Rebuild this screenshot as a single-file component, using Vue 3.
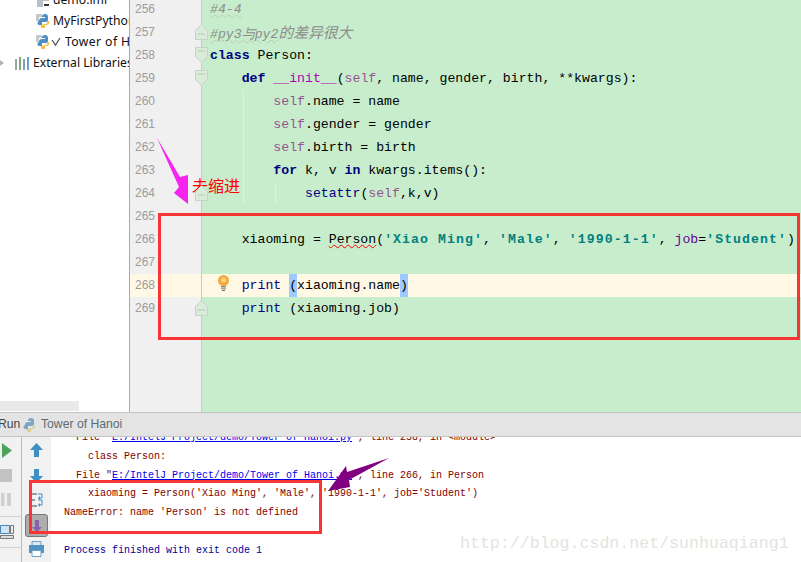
<script setup>
const codeLines = [
  { n: 256, t: [['c', '#4-4']] },
  { n: 257, t: [['c', '#py3与py2'], ['cz', '的差异很大']], fold: 'up' },
  { n: 258, t: [['k', 'class'], ['', ' Person:']], fold: 'down' },
  { n: 259, t: [['', '    '], ['k', 'def'], ['', ' '], ['m', '__init__'], ['', '('], ['s', 'self'], ['', ', name, gender, birth, **kwargs):']], fold: 'down' },
  { n: 260, t: [['', '        '], ['s', 'self'], ['', '.name = name']] },
  { n: 261, t: [['', '        '], ['s', 'self'], ['', '.gender = gender']] },
  { n: 262, t: [['', '        '], ['s', 'self'], ['', '.birth = birth']] },
  { n: 263, t: [['', '        '], ['k', 'for'], ['', ' k, v '], ['k', 'in'], ['', ' kwargs.items():']] },
  { n: 264, t: [['', '            '], ['f', 'setattr'], ['', '('], ['s', 'self'], ['', ',k,v)']], fold: 'up' },
  { n: 265, t: [] },
  { n: 266, t: [['', '    xiaoming = '], ['e', 'Person'], ['', '('], ['q', "'Xiao Ming'"], ['', ', '], ['q', "'Male'"], ['', ', '], ['q', "'1990-1-1'"], ['', ', '], ['j', 'job'], ['', '='], ['q', "'Student'"], ['', ')']] },
  { n: 267, t: [] },
  { n: 268, hl: true, t: [['', '    '], ['f', 'print'], ['', ' '], ['b', '('], ['', 'xiaoming.name'], ['b', ')']] },
  { n: 269, t: [['', '    '], ['f', 'print'], ['', ' (xiaoming.job)']], fold: 'up' }
]
const extraRows = Array.from({ length: 4 }, (_, i) => i)

const consoleLines = [
  [['', '  File "'], ['a', 'E:/IntelJ Project/demo/Tower of Hanoi.py'], ['', '", line 258, in <module>']],
  [['', '    class Person:']],
  [['', '  File "'], ['a', 'E:/IntelJ Project/demo/Tower of Hanoi.py'], ['', '", line 266, in Person']],
  [['', "    xiaoming = Person('Xiao Ming', 'Male', '1990-1-1', job='Student')"]],
  [['', "NameError: name 'Person' is not defined"]],
  [['', ' ']],
  [['p', 'Process finished with exit code 1']]
]
</script>

<template>
  <div class="screen">
    <div class="top">
      <aside class="tree">
        <div class="tree-row row-file">
          <svg class="ico" viewBox="0 0 14 14"><path d="M1 0h12v14H1z" fill="#b9c0c8"/><path d="M7 8h7v6H7z" fill="#fff"/><path d="M8 11h5v2H8z" fill="#333"/></svg>
          <span>demo.iml</span>
        </div>
        <div class="tree-row row-file">
          <svg class="ico" viewBox="0 0 14 14"><path d="M0 0h6v3H3v4H0z" fill="#c4c9cf"/><path d="M3 7a3 3 0 0 1 3-3h3v-1h-3a3 3 0 0 1 3-3 3 3 0 0 1 3 3v3a2 2 0 0 1-2 2H6v3H4a2 2 0 0 1-1-4z" fill="#4d8fc4"/><path d="M13 7a3 3 0 0 1-2 4H9v3H7a2 2 0 0 1-2-3l4-1a2 2 0 0 0 2-3z" fill="#f2c33c"/></svg>
          <span>MyFirstPython</span>
        </div>
        <div class="tree-row row-file">
          <svg class="ico" viewBox="0 0 14 14"><path d="M0 0h6v3H3v4H0z" fill="#c4c9cf"/><path d="M3 7a3 3 0 0 1 3-3h3v-1h-3a3 3 0 0 1 3-3 3 3 0 0 1 3 3v3a2 2 0 0 1-2 2H6v3H4a2 2 0 0 1-1-4z" fill="#4d8fc4"/><path d="M13 7a3 3 0 0 1-2 4H9v3H7a2 2 0 0 1-2-3l4-1a2 2 0 0 0 2-3z" fill="#f2c33c"/></svg>
          <svg class="check" viewBox="0 0 10 10"><path d="M1 3l3.500 5L9 1" fill="none" stroke="#555" stroke-width="1.300"/></svg>
          <span class="tower">Tower of Hanoi</span>
        </div>
        <div class="tree-row row-lib">
          <svg class="caret" viewBox="0 0 4 6"><path d="M0 0l4 3-4 3z" fill="#b5b5b5"/></svg>
          <svg class="ico lib" viewBox="0 0 14 14"><path d="M0 3h2v11H0z" fill="#9aa5ad"/><path d="M4 1h2v13H4z" fill="#7fae6f"/><path d="M8 3h2v11H8z" fill="#8a9bc4"/><path d="M12 1h2v13h-2z" fill="#62a7d2"/></svg>
          <span>External Libraries</span>
        </div>
        <div class="tree-scroll"></div>
      </aside>

      <section class="editor">
        <div class="gutter">
          <div v-for="l in codeLines" :key="l.n" class="g-row" :class="{ hl: l.hl }">
            <span class="num">{{ l.n }}</span>
            <svg v-if="l.fold === 'down'" class="fold" viewBox="0 0 13 16"><path d="M.5 .5h12v9l-6 6-6-6z" fill="#d9ecd9" stroke="#c6d2c6"/><path d="M3 4h7" stroke="#b8c6b8"/></svg>
            <svg v-if="l.fold === 'up'" class="fold" viewBox="0 0 13 16"><path d="M.5 15.500h12v-9l-6-6-6 6z" fill="#d9ecd9" stroke="#c6d2c6"/><path d="M3 10h7" stroke="#b8c6b8"/></svg>
          </div>
        </div>
        <div class="code">
          <i class="guide guide-a"></i>
          <i class="guide guide-b"></i>
          <div v-for="l in codeLines" :key="l.n" class="c-row" :class="{ hl: l.hl }">
            <svg v-if="l.hl" class="bulb" viewBox="0 0 13 16"><circle cx="6.500" cy="5.500" r="5.500" fill="#f5a83c"/><circle cx="6.500" cy="5" r="2.500" fill="#fbd58c"/><path d="M4 11h5v1.500H4z" fill="#8a8a80"/><path d="M4 13h5v1.500H4z" fill="#a8a89e"/><path d="M5 15h3v1H5z" fill="#77776e"/></svg>
            <span v-for="(tk, i) in l.t" :key="i" :class="'t-' + tk[0]">{{ tk[1] }}</span>
          </div>
          <div v-for="r in extraRows" :key="r" class="c-row"></div>
        </div>
      </section>
    </div>

    <header class="run-bar">
      <span class="run">Run</span>
      <svg class="py" viewBox="0 0 14 14"><path d="M3 7a3 3 0 0 1 3-3h3v-1h-3a3 3 0 0 1 3-3 3 3 0 0 1 3 3v3a2 2 0 0 1-2 2H6v3H4a2 2 0 0 1-1-4z" fill="#7da6c6"/><path d="M13 7a3 3 0 0 1-2 4H9v3H7a2 2 0 0 1-2-3l4-1a2 2 0 0 0 2-3z" fill="#d9cf94"/></svg>
      <span class="run-title">Tower of Hanoi</span>
    </header>

    <div class="bottom">
      <div class="rail rail-a">
        <svg class="i-play" width="10" height="15" viewBox="0 0 10 15"><path d="M0 0l10 7.500L0 15z" fill="#4aa55b"/></svg>
        <svg width="12" height="13" viewBox="0 0 12 13"><path d="M0 0h12v13H0z" fill="#c2c2c2"/></svg>
        <svg class="i-pause" width="10" height="13" viewBox="0 0 10 13"><path d="M0 0h3.500v13H0zM6 0h4v13H6z" fill="#cfcfcf"/></svg>
        <i class="rule"></i>
        <svg class="i-layout" width="14" height="15" viewBox="0 0 14 15"><path d="M.5 1.500h9v8h-9z" fill="#cfe3f2" stroke="#4a86b8"/><path d="M10.500 1.500h3v8h-3z" fill="#eee" stroke="#777"/><path d="M.5 11.500h13v3H.5z" fill="#ddd" stroke="#777"/></svg>
        <i class="rule"></i>
      </div>
      <div class="rail rail-b">
        <svg width="13" height="14" viewBox="0 0 13 14"><path d="M6.500 0L13 7H9v7H4V7H0z" fill="#3f8fc4"/></svg>
        <svg width="13" height="14" viewBox="0 0 13 14"><path d="M6.500 14L13 7H9V0H4v7H0z" fill="#3f8fc4"/></svg>
        <svg class="i-wrap" width="12" height="16" viewBox="0 0 12 16"><path d="M0 2h6M0 8h4M0 14h6" stroke="#444" stroke-width="1" fill="none"/><path d="M7 2h4v4H8M7 8h4v5H8" stroke="#3f8fc4" fill="none"/><path d="M9 4v4L7 6zM9 11v4l-2-2z" fill="#3f8fc4"/></svg>
        <span class="toggle">
          <svg width="10" height="12" viewBox="0 0 10 12"><path d="M5 12l5-5H7V0H3v7H0z" fill="#8a5fae"/></svg>
        </span>
        <svg class="i-print" width="15" height="16" viewBox="0 0 15 16"><path d="M3 .5h9v4H3z" fill="#dfe8ef" stroke="#6aa0c8"/><path d="M0 4h15v8H0z" fill="#4f93c4"/><path d="M3 9.500h9v6H3z" fill="#fff" stroke="#6aa0c8"/></svg>
      </div>
      <div class="console">
        <div class="console-lines">
          <div v-for="(line, i) in consoleLines" :key="i" class="con-row">
            <span v-for="(tk, j) in line" :key="j" :class="'o-' + tk[0]">{{ tk[1] }}</span>
          </div>
        </div>
      </div>
    </div>

    <div class="mark mark-code"></div>
    <div class="mark mark-console"></div>
    <span class="note">未缩进</span>
    <svg class="arrows" width="801" height="562" viewBox="0 0 801 562">
      <path d="M157 138L180 177 188 175 188 204 174 193 179 187z" fill="#f524ee"/>
      <path d="M389 458L347 472 346 466 328 491 350 487 349 480z" fill="#800080"/>
    </svg>
    <span class="watermark">http://blog.csdn.net/sunhuaqiang1</span>
  </div>
</template>

<style>
html, body { margin: 0; padding: 0; background: #fff; }
</style>

<style scoped>
.screen {
  position: relative;
  width: 801px;
  height: 562px;
  overflow: hidden;
  display: flex;
  flex-direction: column;
  background: #fff;
  font-family: "Liberation Mono", monospace;
}
.top { height: 412px; display: flex; overflow: hidden; }

.tree {
  width: 129px;
  flex: none;
  border-right: 1px solid #a9a9a9;
  display: flex;
  flex-direction: column;
  overflow: hidden;
  font: 12.2px/21px "Noto Sans", sans-serif;
  color: #111;
  white-space: nowrap;
  margin-top: -11px;
}
.tree-row { height: 21px; flex: none; display: flex; align-items: center; }
.row-file { padding-left: 36px; }
.row-lib { padding-left: 0; }
.ico { width: 14px; height: 14px; flex: none; margin-right: 3px; }
.check { width: 10px; height: 10px; margin: 0 4px 0 -2px; flex: none; }
.tower { letter-spacing: .4px; }
.caret { width: 4px; height: 6px; margin-right: 11px; flex: none; }
.lib { margin-right: 4px; }
.tree-scroll { margin-top: auto; width: 79px; height: 10px; background: #e9e9e9; margin-bottom: 1px; flex: none; }

.editor { flex: 1; display: flex; min-width: 0; background: #c7edcc; }
.gutter {
  width: 71px;
  flex: none;
  background: #f0f0f0;
  border-right: 1px solid #c9c9c9;
  margin-top: -2px;
}
.g-row { position: relative; height: 23px; }
.g-row.hl { background: #fff8e5; }
.num {
  display: block;
  padding-left: 5px;
  font: 12px/23px "Liberation Sans", sans-serif;
  color: #9c9c9c;
}
.fold { position: absolute; left: 65px; top: 3px; width: 13px; height: 16px; z-index: 1; }

.code {
  position: relative;
  flex: 1;
  min-width: 0;
  margin-top: -2px;
}
.guide { position: absolute; width: 1px; background: #dff2e0; z-index: 0; }
.guide-a { left: 41px; top: 92px; height: 115px; }
.guide-b { left: 73px; top: 184px; height: 23px; }
.c-row {
  position: relative;
  height: 23px;
  padding-left: 8px;
  font-size: 13.2px;
  line-height: 23px;
  white-space: pre;
  color: #000;
}
.c-row.hl { background: #fff8e5; }
.bulb { position: absolute; left: 15px; top: 1px; width: 13px; height: 16px; }
.t-c { color: #8c8c8c; font-style: italic; text-decoration: underline wavy #b8ccb8 1px; }
.t-cz { color: #8c8c8c; font: italic 14.8px "Noto Sans CJK SC", sans-serif; }
.t-k { color: #000080; font-weight: 700; }
.t-m { color: #b200b2; }
.t-s { color: #94558d; }
.t-f { color: #000080; }
.t-e { text-decoration: underline wavy #f00 1px; }
.t-q { color: #008080; font-weight: 700; letter-spacing: 1.08px; }
.t-j { color: #660099; }
.t-b { display: inline-block; height: 23px; vertical-align: top; background: #9ecbff; }

.run-bar {
  height: 23px;
  flex: none;
  display: flex;
  align-items: center;
  background: #e4e4e4;
  border-top: 1px solid #c4c4c4;
  font: 12.2px/23px "Liberation Sans", sans-serif;
  color: #444;
}
.run { margin-left: -2px; width: 24px; }
.py { width: 14px; height: 14px; margin-right: 5px; }
.run-title { color: #5e6b74; }

.bottom { flex: 1; min-height: 0; display: flex; border-top: 1px solid #c4c4c4; }
.rail {
  flex: none;
  display: flex;
  flex-direction: column;
  overflow: hidden;
  background: #f1f1f1;
  border-right: 1px solid #bdbdbd;
}
.rail svg { flex: none; }
.rail-a { width: 21px; padding-top: 6px; gap: 11px; align-items: flex-start; }
.i-play { margin-left: 2px; }
.i-pause { margin-left: 1px; }
.i-layout { margin-bottom: -2px; }
.rule { display: block; height: 1px; width: 21px; background: #d0d0d0; flex: none; margin: -1px 0 -4px; }
.rail-b { width: 29px; padding-top: 6px; align-items: center; border-right: 0; }
.rail-b svg:nth-child(2) { margin-top: 12px; }
.i-wrap { margin-top: 9px; }
.toggle {
  width: 23px;
  height: 23px;
  flex: none;
  margin: 6px 0 4px;
  display: flex;
  align-items: center;
  justify-content: center;
  background: #adadad;
  border: 1px solid #777;
  border-radius: 3px;
  box-sizing: border-box;
}
.console {
  flex: 1;
  min-width: 0;
  padding-left: 13px;
  overflow: hidden;
  font-size: 10px;
  color: #7f0000;
  white-space: pre;
}
.console-lines { margin-top: -8px; }
.con-row { height: 18.8px; line-height: 18.8px; }
.o-a { color: #0000ee; text-decoration: underline; }
.o-p { color: #000099; }

.mark { position: absolute; box-sizing: border-box; border: 3px solid #f93434; pointer-events: none; }
.mark-code { left: 158px; top: 213px; width: 642px; height: 127px; }
.mark-console { left: 29px; top: 480px; width: 293px; height: 54px; }
.note {
  position: absolute;
  left: 192px;
  top: 174px;
  font: 16px/22px "Noto Sans CJK SC", sans-serif;
  color: #f00;
}
.arrows { position: absolute; left: 0; top: 0; pointer-events: none; }
.watermark {
  position: absolute;
  left: 460px;
  top: 534px;
  font-family: "Liberation Mono", monospace;
  font-size: 16.6px;
  line-height: 20px;
  color: #e4e4de;
  white-space: pre;
}
</style>
